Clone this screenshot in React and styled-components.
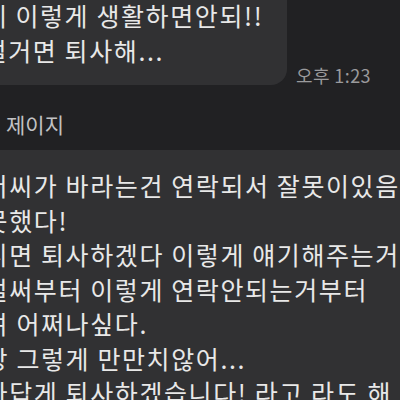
import styled, { createGlobalStyle } from "styled-components";

const GlobalStyle = createGlobalStyle`
    * {
        box-sizing: border-box;
        margin: 0;
        padding: 0;
    }

    body {
        background-color: #212123;
        font-family: "Noto Sans CJK KR", "Noto Sans", sans-serif;
    }
`

export default function App() {
    return (
        <Page>
            <GlobalStyle />
            <MessageRow>
                <Bubble width={342} shift={-55}>
                    <Line>근데 이렇게 생활하면안되!!</Line>
                    <Line>그럴거면 퇴사해...</Line>
                </Bubble>
                <Time>오후 1:23</Time>
            </MessageRow>
            <Sender>
                <Name>제이지</Name>
                <Bubble width={520} shift={-60} gapTop={13}>
                    <Line>아저씨가 바라는건 연락되서 잘못이있음 말하고</Line>
                    <Line>잘못했다!</Line>
                    <Line>아니면 퇴사하겠다 이렇게 얘기해주는거지</Line>
                    <Line>왜벌써부터 이렇게 연락안되는거부터</Line>
                    <Line>하려 어쩌나싶다.</Line>
                    <Line>세상 그렇게 만만치않어...</Line>
                    <Line>남자답게 퇴사하겠습니다! 라고 라도 해</Line>
                </Bubble>
            </Sender>
        </Page>
    )
}

const Page = styled.div`
    width: 400px;
    height: 400px;
    overflow: hidden;

    background-color: #212123;
    color: #e8e8e8;
`

const MessageRow = styled.div`
    display: flex;
    align-items: flex-end;
    gap: 9px;

    margin-top: -20px;
`

const Bubble = styled.div`
    flex-shrink: 0;
    width: ${(props) => props.width}px;
    margin-left: ${(props) => props.shift}px;
    margin-top: ${(props) => props.gapTop || 0}px;
    padding: 18px 14px;

    background-color: #313133;
    border-radius: 16px;
`

const Line = styled.p`
    font-size: 25px;
    line-height: 34.5px;
    letter-spacing: 1.6px;
    white-space: nowrap;
    color: #e8e8e8;
`

const Time = styled.span`
    font-size: 18px;
    line-height: 18px;
    letter-spacing: 0.4px;
    margin-bottom: 1px;
    white-space: nowrap;

    color: #9a9a9c;
`

const Sender = styled.div`
    display: flex;
    flex-direction: column;

    padding-left: 6px;
    margin-top: 27px;
`

const Name = styled.p`
    font-size: 21px;
    line-height: 25px;
    color: #c2c2c4;
`
